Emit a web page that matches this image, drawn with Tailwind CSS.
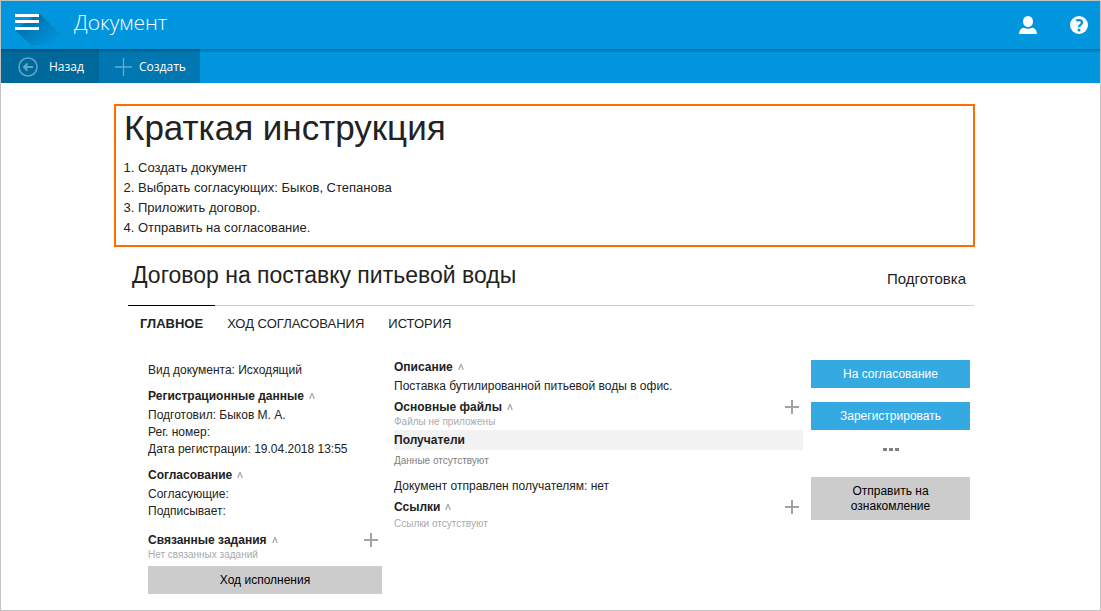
<!DOCTYPE html>
<html lang="ru">
<head>
<meta charset="utf-8">
<title>Документ</title>
<meta name="viewport" content="width=device-width, initial-scale=1">
<script src="https://cdn.jsdelivr.net/npm/@tailwindcss/browser@4"></script>
</head>
<body class="min-h-screen flex flex-col border border-[#c3c3c3] bg-white font-['Liberation_Sans',sans-serif] text-[12px] text-[#222222]">
<svg class="hidden">
  <symbol id="caret" viewBox="0 0 6 6"><path d="M.8 6 2.8.6h.4L5.200 6" fill="none" stroke="#aaaaaa" stroke-width="1.300"/></symbol>
  <symbol id="plus" viewBox="0 0 14 14"><path d="M7 0v14M0 7h14" fill="none" stroke="#a3a3a3" stroke-width="2"/></symbol>
</svg>
<header class="text-white font-['Open_Sans',sans-serif]">
  <div class="h-12 flex items-center bg-[#0095dc] pr-3">
    <button type="button" aria-label="Меню" class="w-[73px] h-12 shrink-0">
      <svg class="block" width="73" height="48" viewBox="0 0 73 48">
        <defs><linearGradient id="shade" x1="26" y1="14" x2="50" y2="44" gradientUnits="userSpaceOnUse"><stop offset="0" stop-color="#006da7"/><stop offset="1" stop-color="#0095dc"/></linearGradient></defs>
        <path d="M38 12 70 44H30L14 29z" fill="url(#shade)"/>
        <path d="M14 13h24v3H14zM14 19h24v3H14zM14 26h24v3H14z" fill="#fff"/>
      </svg>
    </button>
    <h1 class="grow text-[21px] leading-[28px] font-light pb-[6px]">Документ</h1>
    <button type="button" aria-label="Профиль" class="mr-[33px]">
      <svg class="block" width="18" height="18" viewBox="0 0 18 18" fill="#fff"><ellipse cx="9" cy="5.500" rx="5" ry="5.500"/><path d="M0 18c.3-3.700 2-6 4.700-6.300C7.500 13 10.500 13 13.300 11.700 16 12 17.700 14.300 18 18z"/></svg>
    </button>
    <button type="button" aria-label="Справка">
      <svg class="block" width="18" height="18" viewBox="0 0 18 18"><circle cx="9" cy="9" r="9" fill="#fff"/><path d="M6.200 4.800C8 3.700 12 3.700 12 6.600 12 9 9 8.800 9 11.200" fill="none" stroke="#0095dc" stroke-width="2.300"/><circle cx="9" cy="14" r="1.500" fill="#0095dc"/></svg>
    </button>
  </div>
  <nav class="relative h-[34px] flex bg-[#0095dc] text-[12px]">
    <button type="button" class="w-[98px] flex items-center gap-[11px] pl-[17px] pt-[2px] bg-[#00699b]">
      <svg width="20" height="20" viewBox="0 0 20 20" fill="none" stroke="#62a6c8"><circle cx="10" cy="10" r="9" stroke-width="1.500"/><path d="M15 10H6M9.500 6.500 6 10l3.500 3.500" stroke-width="2"/></svg>
      Назад
    </button>
    <button type="button" class="w-[101px] flex items-center gap-[7px] pl-4 pt-[2px] bg-[#0077b0]">
      <svg width="17" height="18" viewBox="0 0 17 18" fill="none" stroke="#62add3" stroke-width="1.300"><path d="M8.500 0v18M0 9h17"/></svg>
      Создать
    </button>
    <div class="absolute inset-x-0 top-0 h-1 bg-gradient-to-b from-black/25 to-transparent"></div>
  </nav>
</header>
<main class="pt-[21px] pl-[113px] pr-[125px] pb-4">
  <section class="border-2 border-[#ff6d00] pl-2 pb-[7px]">
    <h2 class="text-[35px] leading-[44px]">Краткая инструкция</h2>
    <ol class="mt-2 pl-[14px] list-decimal text-[13px] leading-[20px]">
      <li>Создать документ</li>
      <li>Выбрать согласующих: Быков, Степанова</li>
      <li>Приложить договор.</li>
      <li>Отправить на согласование.</li>
    </ol>
  </section>
  <div class="pl-[14px] pr-px">
    <div class="flex justify-between pl-1 pr-2 pt-[14px] pb-4">
      <h2 class="text-[23px] leading-[28px]">Договор на поставку питьевой воды</h2>
      <p class="text-[15px] leading-[36px] h-7">Подготовка</p>
    </div>
    <div class="flex border-t border-[#cccccc] text-[13px] leading-[36px]">
      <button type="button" class="-mt-px border-t border-black px-3 font-bold">ГЛАВНОЕ</button>
      <button type="button" class="px-3">ХОД СОГЛАСОВАНИЯ</button>
      <button type="button" class="px-3">ИСТОРИЯ</button>
    </div>
    <div class="flex items-start pt-4 pl-5 pr-1 leading-[18px]">
      <section class="w-[234px] shrink-0 mr-3 pt-[3px]">
        <p>Вид документа: Исходящий</p>
        <button type="button" class="mt-2 flex items-center gap-[5px] font-bold">Регистрационные данные <svg width="6" height="6"><use href="#caret"/></svg></button>
        <div class="mt-[2px] leading-[17px]"><p>Подготовил: Быков М. А.</p><p>Рег. номер:</p><p>Дата регистрации: 19.04.2018 13:55</p></div>
        <button type="button" class="mt-2 flex items-center gap-[5px] font-bold">Согласование <svg width="6" height="6"><use href="#caret"/></svg></button>
        <div class="mt-[2px] leading-[17px]"><p>Согласующие:</p><p>Подписывает:</p></div>
        <div class="mt-[11px] flex items-center justify-between pr-1">
          <button type="button" class="flex items-center gap-[5px] font-bold">Связанные задания <svg width="6" height="6"><use href="#caret"/></svg></button>
          <button type="button" aria-label="Добавить задание"><svg width="14" height="14"><use href="#plus"/></svg></button>
        </div>
        <p class="text-[10px] leading-[12px] text-[#aaaaaa]">Нет связанных заданий</p>
        <button type="button" class="mt-[5px] w-full h-7 bg-[#cccccc] text-black">Ход исполнения</button>
      </section>
      <section class="grow min-w-0 mr-2">
        <button type="button" class="flex items-center gap-[5px] font-bold">Описание <svg width="6" height="6"><use href="#caret"/></svg></button>
        <p class="mt-px">Поставка бутилированной питьевой воды в офис.</p>
        <div class="mt-[3px] flex items-center justify-between pr-1">
          <button type="button" class="flex items-center gap-[5px] font-bold">Основные файлы <svg width="6" height="6"><use href="#caret"/></svg></button>
          <button type="button" aria-label="Добавить файл"><svg width="14" height="14"><use href="#plus"/></svg></button>
        </div>
        <p class="text-[10px] leading-[12px] text-[#aaaaaa]">Файлы не приложены</p>
        <h3 class="mt-[2px] leading-[20px] bg-[#f2f2f2] font-bold">Получатели</h3>
        <p class="mt-[5px] text-[10px] leading-[12px] text-[#808080]">Данные отсутствуют</p>
        <p class="mt-[10px]">Документ отправлен получателям: нет</p>
        <div class="mt-[3px] flex items-center justify-between pr-1">
          <button type="button" class="flex items-center gap-[5px] font-bold">Ссылки <svg width="6" height="6"><use href="#caret"/></svg></button>
          <button type="button" aria-label="Добавить ссылку"><svg width="14" height="14"><use href="#plus"/></svg></button>
        </div>
        <p class="mt-[2px] text-[10px] leading-[12px] text-[#aaaaaa]">Ссылки отсутствуют</p>
      </section>
      <section class="w-[159px] shrink-0 pt-[2px] flex flex-col">
        <button type="button" class="h-7 bg-[#35aae2] text-white">На согласование</button>
        <button type="button" class="mt-[14px] h-7 bg-[#35aae2] text-white">Зарегистрировать</button>
        <button type="button" aria-label="Ещё" class="h-[47px] flex justify-center pt-[18px]"><svg width="16" height="3" fill="#808080"><path d="M0 0h4v3H0zM6 0h4v3H6zM12 0h4v3h-4z"/></svg></button>
        <button type="button" class="h-[43px] px-8 leading-[15px] bg-[#cccccc] text-black">Отправить на ознакомление</button>
      </section>
    </div>
  </div>
</main>
</body>
</html>
